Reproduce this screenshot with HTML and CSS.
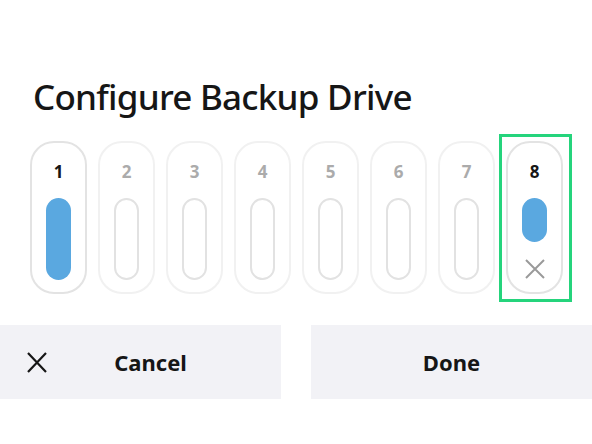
FILE: index.html
```html
<!DOCTYPE html>
<html>
<head>
<meta charset="utf-8">
<link rel="stylesheet" href="styles.css">
</head>
<body>
<div class="page">
  <h1 class="title">Configure Backup Drive</h1>
  <div class="bays">
    <div class="bay bay-active"><span class="num">1</span><span class="slot slot-full"></span></div>
    <div class="bay"><span class="num">2</span><span class="slot"></span></div>
    <div class="bay"><span class="num">3</span><span class="slot"></span></div>
    <div class="bay"><span class="num">4</span><span class="slot"></span></div>
    <div class="bay"><span class="num">5</span><span class="slot"></span></div>
    <div class="bay"><span class="num">6</span><span class="slot"></span></div>
    <div class="bay"><span class="num">7</span><span class="slot"></span></div>
    <div class="bay bay-active bay-selected"><span class="num">8</span><span class="slot slot-short"></span>
      <svg class="remove" width="20" height="20" viewBox="0 0 20 20"><path d="M1 1 L19 19 M19 1 L1 19" stroke="#9a9a9a" stroke-width="2" fill="none"/></svg>
    </div>
  </div>
  <div class="actions">
    <div class="btn btn-cancel">
      <svg class="btn-icon" width="20" height="21" viewBox="0 0 20 21"><path d="M1 1 L19 20 M19 1 L1 20" stroke="#161616" stroke-width="2.2" fill="none"/></svg>
      <span class="btn-label">Cancel</span>
    </div>
    <div class="btn btn-done"><span class="btn-label">Done</span></div>
  </div>
</div>
</body>
</html>
```
FILE: styles.css
```css
html, body {
  margin: 0;
  padding: 0;
  background: #ffffff;
}
.page {
  width: 592px;
  height: 444px;
  font-family: "Noto Sans", "Open Sans", sans-serif;
  color: #161616;
  padding-top: 75px;
  box-sizing: border-box;
}
.title {
  margin: 0 0 0 33px;
  font-size: 35px;
  line-height: 44px;
  font-weight: 500;
  letter-spacing: -0.75px;
}
.bays {
  display: flex;
  gap: 11px;
  padding-left: 30px;
  margin-top: 22px;
}
.bay {
  position: relative;
  width: 57px;
  height: 153px;
  box-sizing: border-box;
  border: 2px solid #f1f1f1;
  border-radius: 24px;
  display: flex;
  flex-direction: column;
  align-items: center;
  padding-top: 19px;
}
.bay-active {
  border-color: #e3e3e3;
}
.num {
  font-size: 17px;
  line-height: 20px;
  font-weight: 700;
  color: #ababab;
}
.bay-active .num {
  color: #161616;
}
.slot {
  margin-top: 16px;
  width: 25px;
  height: 82px;
  box-sizing: border-box;
  border: 2px solid #e2e2e2;
  border-radius: 13px;
}
.slot-full {
  background: #5aa8e0;
  border: none;
}
.slot-short {
  height: 44px;
  background: #5aa8e0;
  border: none;
}
.remove {
  margin-top: 17px;
}
.bay-selected::after {
  content: "";
  position: absolute;
  left: -9px;
  right: -11px;
  top: -9px;
  bottom: -10px;
  border: 3px solid #25d47c;
}
.actions {
  display: flex;
  gap: 30px;
  margin-top: 31px;
}
.btn {
  width: 281px;
  height: 74px;
  background: #f2f2f6;
  display: flex;
  align-items: center;
  box-sizing: border-box;
}
.btn-cancel {
  padding: 0 27px;
}
.btn-icon {
  flex: none;
}
.btn-label {
  flex: 1;
  text-align: center;
  font-size: 22px;
  font-weight: 700;
  color: #161616;
}
```
